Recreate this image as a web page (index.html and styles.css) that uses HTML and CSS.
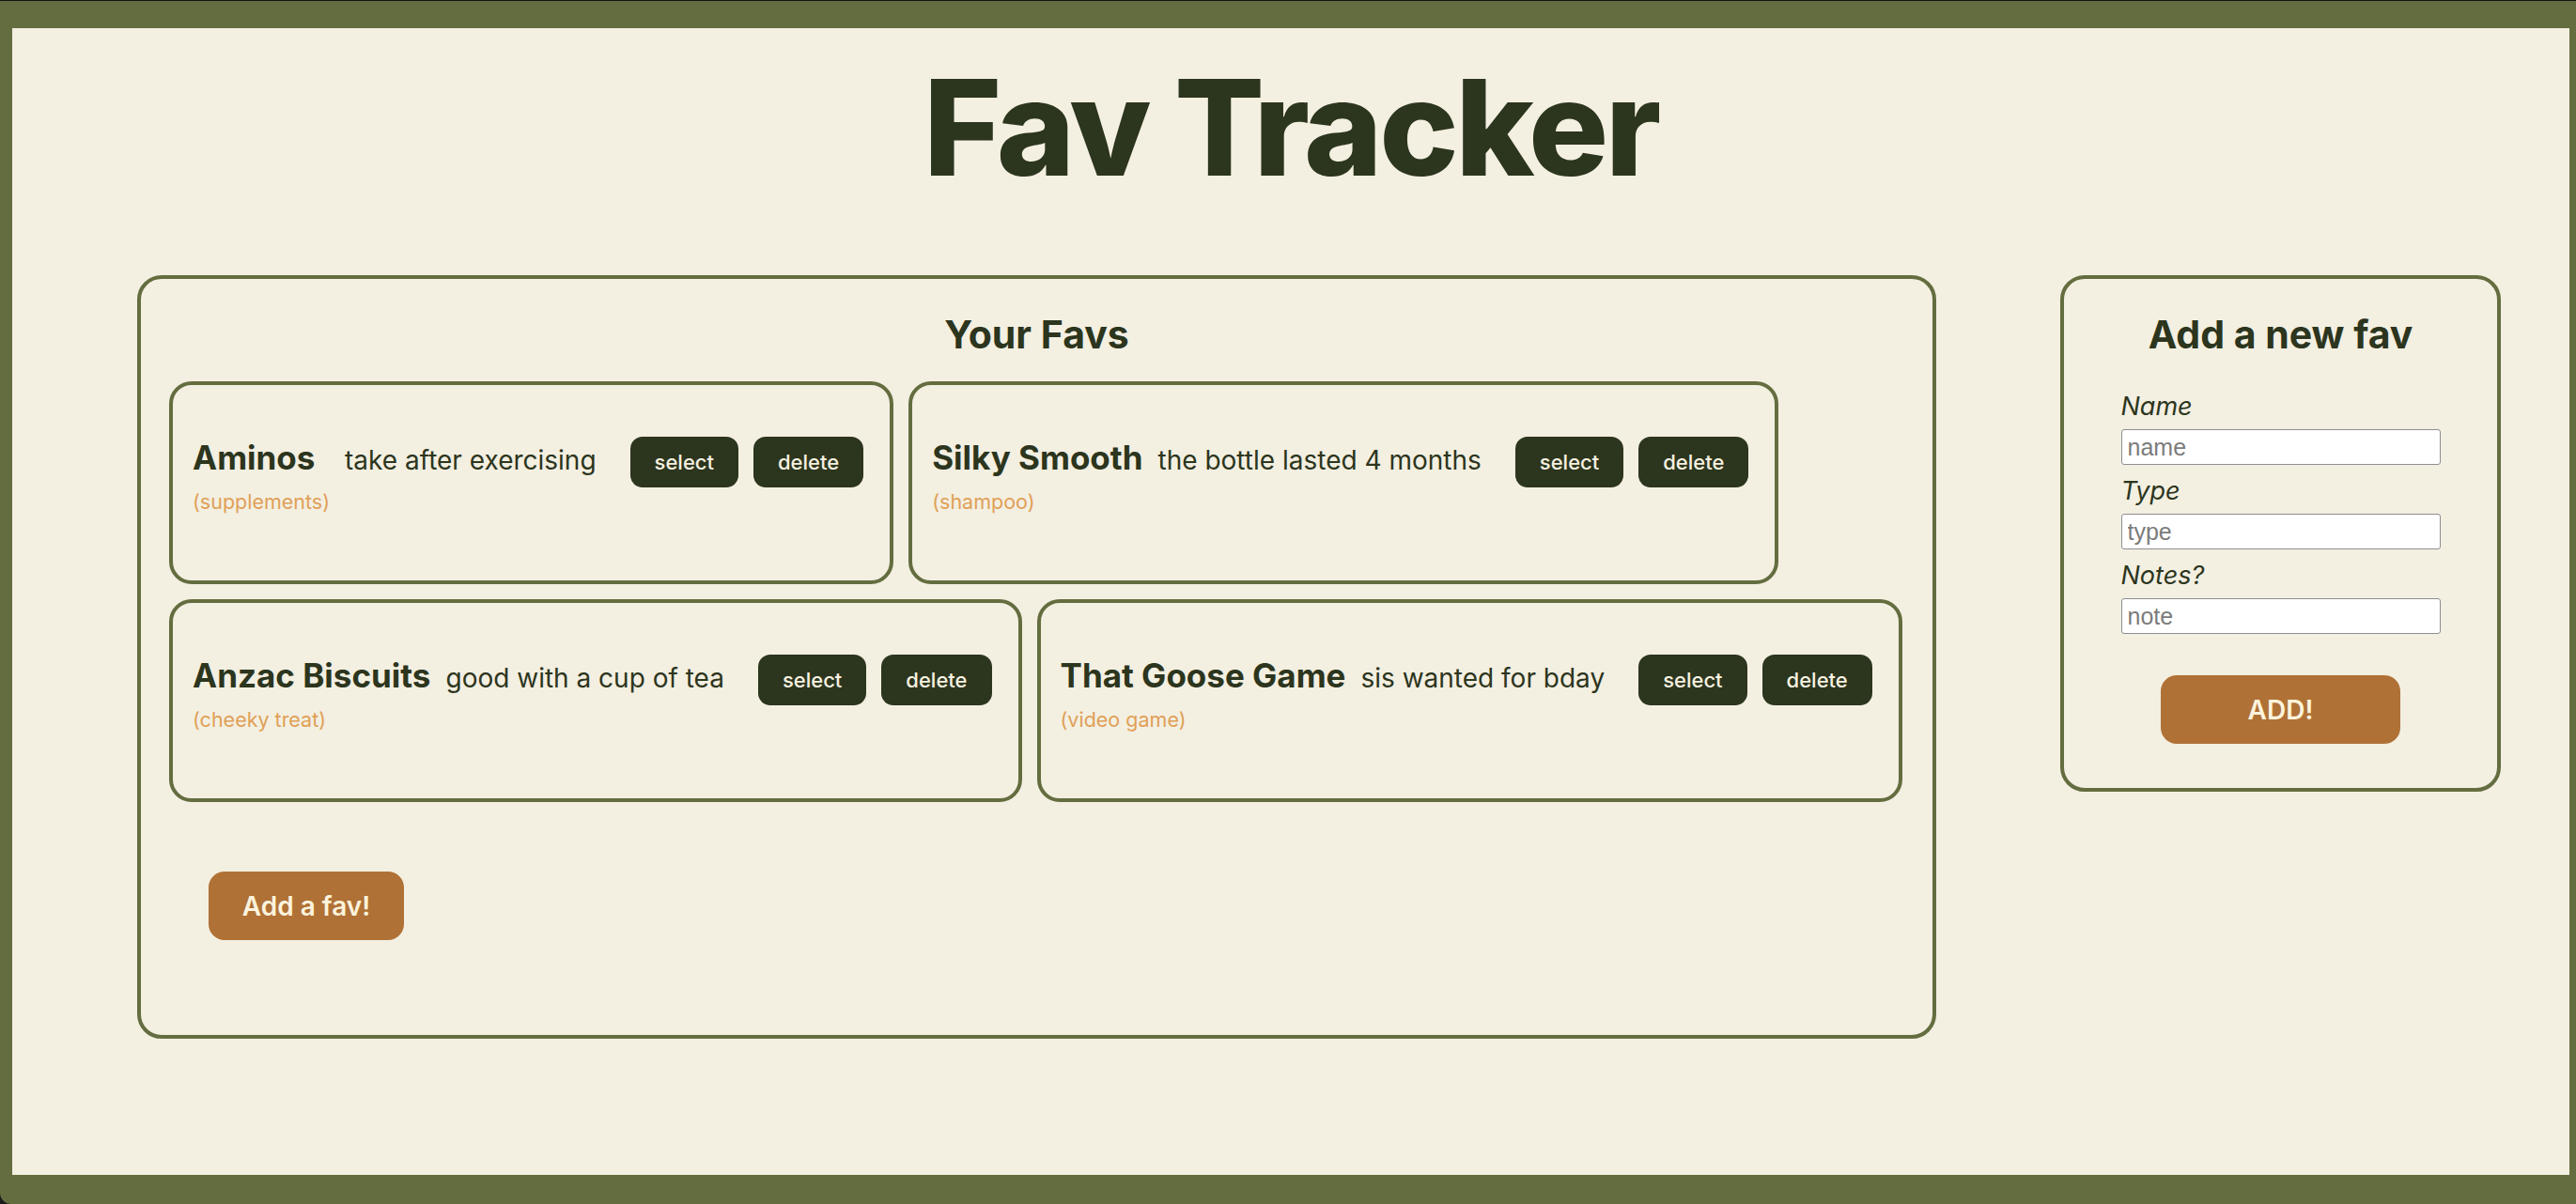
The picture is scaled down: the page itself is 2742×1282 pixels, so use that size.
FILE: index.html
```html
<!DOCTYPE html>
<html lang="en">
<head>
<meta charset="utf-8">
<title>Fav Tracker</title>
<link rel="stylesheet" href="styles.css">
</head>
<body>
<div class="app">
  <h1 class="title">Fav Tracker</h1>
  <div class="layout">
    <section class="panel favs">
      <h2 class="panel-title">Your Favs</h2>
      <div class="cards">
        <article class="card">
          <div class="info">
            <h3 class="card-name">Aminos</h3>
            <p class="card-type">(supplements)</p>
          </div>
          <p class="card-note">take after exercising</p>
          <div class="card-actions">
            <button class="btn-dark">select</button>
            <button class="btn-dark">delete</button>
          </div>
        </article>
        <article class="card">
          <div class="info">
            <h3 class="card-name">Silky Smooth</h3>
            <p class="card-type">(shampoo)</p>
          </div>
          <p class="card-note">the bottle lasted 4 months</p>
          <div class="card-actions">
            <button class="btn-dark">select</button>
            <button class="btn-dark">delete</button>
          </div>
        </article>
        <article class="card">
          <div class="info">
            <h3 class="card-name">Anzac Biscuits</h3>
            <p class="card-type">(cheeky treat)</p>
          </div>
          <p class="card-note">good with a cup of tea</p>
          <div class="card-actions">
            <button class="btn-dark">select</button>
            <button class="btn-dark">delete</button>
          </div>
        </article>
        <article class="card">
          <div class="info">
            <h3 class="card-name">That Goose Game</h3>
            <p class="card-type">(video game)</p>
          </div>
          <p class="card-note">sis wanted for bday</p>
          <div class="card-actions">
            <button class="btn-dark">select</button>
            <button class="btn-dark">delete</button>
          </div>
        </article>
      </div>
      <button class="btn-orange add-fav">Add a fav!</button>
    </section>
    <section class="panel new-fav">
      <h2 class="panel-title">Add a new fav</h2>
      <form class="form">
        <label class="field-label" for="f-name">Name</label>
        <input class="field-input" id="f-name" type="text" placeholder="name">
        <label class="field-label" for="f-type">Type</label>
        <input class="field-input" id="f-type" type="text" placeholder="type">
        <label class="field-label" for="f-note">Notes?</label>
        <input class="field-input" id="f-note" type="text" placeholder="note">
        <button class="btn-orange btn-add" type="button">ADD!</button>
      </form>
    </section>
  </div>
</div>
</body>
</html>
```
FILE: styles.css
```css
* { box-sizing: border-box; }

html {
  background: #1b1b1b;
  height: 100%;
}

body {
  margin: 0;
  height: 100%;
  border-top: 1px solid #141414;
  padding: 29px 7px 31px 13px;
  background: #646d3f;
  border-bottom-left-radius: 12px;
  font-family: Inter, "Noto Sans", sans-serif;
  color: #2c351d;
}

.app {
  height: 100%;
  background: #f3efe1;
  overflow: hidden;
}

.title {
  margin: 34px 0 0;
  text-align: center;
  font-size: 142px;
  line-height: 142px;
  font-weight: 800;
  letter-spacing: -3.4px;
  color: #2c351d;
}

.layout {
  display: flex;
  align-items: flex-start;
  gap: 132px;
  padding-left: 133px;
  margin-top: 87px;
}

.panel {
  border: 4px solid #646d3f;
  border-radius: 26px;
}

.panel-title {
  margin: 0;
  text-align: center;
  font-size: 41px;
  line-height: 50px;
  font-weight: 700;
}

.favs {
  width: 1915px;
  flex: none;
  padding: 34px 30px 101px 30px;
}

.cards {
  display: flex;
  flex-wrap: wrap;
  gap: 16px;
  margin-top: 25px;
  margin-right: -40px;
}

.card {
  display: flex;
  align-items: baseline;
  gap: 16px;
  height: 216px;
  padding: 55px 28px 0 21px;
  border: 4px solid #646d3f;
  border-radius: 24px;
}

.info {
  display: flex;
  flex-direction: column;
}

.card-name {
  margin: 0;
  font-size: 35px;
  line-height: 40px;
  font-weight: 700;
  white-space: nowrap;
}

.card-type {
  margin: 14px 0 0;
  font-size: 21.5px;
  line-height: 26px;
  color: #e0a057;
  white-space: nowrap;
}

.card-note {
  margin: 0;
  font-size: 28px;
  line-height: 32px;
  white-space: nowrap;
}

.card-actions {
  display: flex;
  align-items: baseline;
  gap: 16px;
  margin-left: 20px;
}

.btn-dark {
  font-family: Inter, "Noto Sans", sans-serif;
  font-size: 22px;
  line-height: 28px;
  font-weight: 500;
  padding: 13px 26px;
  border: none;
  border-radius: 13px;
  background: #2c351d;
  color: #f6f1e0;
}

.btn-orange {
  font-family: Inter, "Noto Sans", sans-serif;
  font-size: 28px;
  line-height: 34px;
  font-weight: 600;
  border: none;
  border-radius: 17px;
  background: #b07136;
  color: #fbf3dc;
  height: 73px;
}

.add-fav {
  display: block;
  margin: 74px 0 0 42px;
  width: 208px;
}

.new-fav {
  width: 469px;
  flex: none;
  height: 550px;
  padding: 34px 0 0;
}

.form {
  display: flex;
  flex-direction: column;
  align-items: center;
  margin-top: 36px;
}

.field-label {
  width: 340px;
  font-size: 27px;
  line-height: 32px;
  font-style: italic;
  margin-bottom: 8px;
}

.field-input {
  width: 340px;
  height: 38px;
  margin: 0 0 12px;
  padding: 0 6px;
  border: 1px solid #8e8e93;
  border-radius: 3px;
  background: #ffffff;
  font-family: "Liberation Sans", Arial, sans-serif;
  font-size: 25px;
  color: #2c351d;
}

.field-input::placeholder {
  color: #7b7b7b;
}

.btn-add {
  width: 255px;
  margin-top: 32px;
}
```
